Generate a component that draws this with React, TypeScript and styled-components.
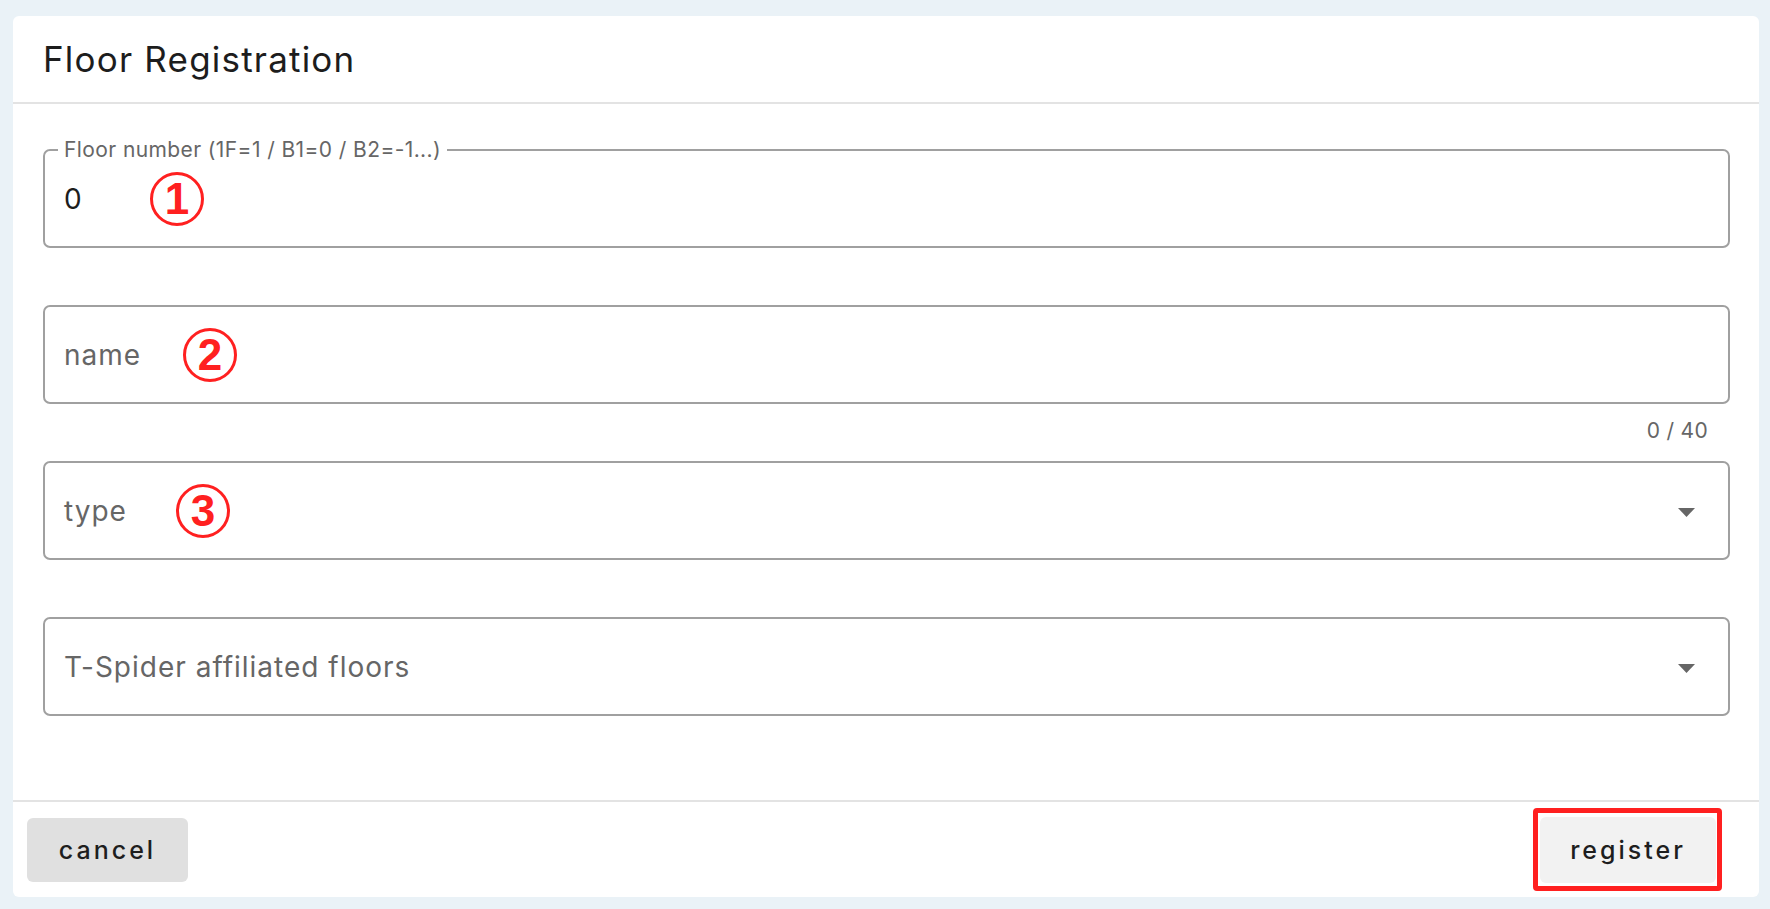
import styled, { createGlobalStyle } from "styled-components";

const GlobalStyle = createGlobalStyle`
  html, body {
    margin: 0;
    padding: 0;
    background: #eaf2f7;
  }
  body {
    font-family: Inter, "Noto Sans", sans-serif;
  }
  * {
    box-sizing: border-box;
  }
`;

const Page = styled.div`
  width: 1770px;
  height: 909px;
  padding: 16px 11px 12px 13px;
  background: #eaf2f7;
`;

const Card = styled.div`
  height: 100%;
  background: #fff;
  border-radius: 6px;
  display: flex;
  flex-direction: column;
  overflow: hidden;
`;

const Header = styled.div`
  height: 88px;
  padding: 0 30px;
  display: flex;
  align-items: center;
  border-bottom: 2px solid #e3e3e3;
`;

const Title = styled.h2`
  margin: 0;
  font-size: 35px;
  font-weight: 400;
  letter-spacing: 1.2px;
  color: #1d1d1d;
`;

const Body = styled.div`
  flex: 1;
  padding: 45px 29px 0 30px;
  display: flex;
  flex-direction: column;
`;

const Group = styled.div<{ $gap?: number }>`
  margin-bottom: ${(p) => p.$gap ?? 57}px;
`;

const Field = styled.div`
  position: relative;
  height: 99px;
  border: 2px solid #a0a0a0;
  border-radius: 7px;
  display: flex;
  align-items: center;
  padding: 0 19px;
`;

const Legend = styled.span`
  position: absolute;
  left: 13px;
  top: -13px;
  padding: 0 6px;
  line-height: 24px;
  font-size: 21px;
  letter-spacing: 0.4px;
  color: #666;
  background: #fff;
`;

const Value = styled.span<{ $muted?: boolean }>`
  font-size: 28px;
  letter-spacing: 1px;
  color: ${(p) => (p.$muted ? "#666" : "#1d1d1d")};
`;

const Arrow = styled.svg`
  margin-left: auto;
  margin-right: 14px;
  margin-top: 4px;
`;

const Helper = styled.div`
  margin: 15px 0 18px;
  padding-right: 22px;
  text-align: right;
  line-height: 24px;
  font-size: 21px;
  letter-spacing: 0.3px;
  color: #666;
`;

const Badge = styled.span<{ $left: number }>`
  position: absolute;
  left: ${(p) => p.$left}px;
  top: 50%;
  transform: translateY(-50%);
  width: 54px;
  height: 54px;
  border: 3px solid #ff2020;
  border-radius: 50%;
  display: flex;
  align-items: center;
  justify-content: center;
  font-family: "Liberation Sans", Arial, sans-serif;
  font-weight: 700;
  font-size: 44px;
  color: #ff2020;
`;

const Footer = styled.div`
  height: 97px;
  border-top: 2px solid #e3e3e3;
  display: flex;
  align-items: center;
  justify-content: space-between;
  padding: 0 43px 0 14px;
`;

const Button = styled.button<{ $bg: string; $w: number; $h: number }>`
  width: ${(p) => p.$w}px;
  height: ${(p) => p.$h}px;
  border: none;
  border-radius: 6px;
  background: ${(p) => p.$bg};
  font-family: inherit;
  font-size: 25px;
  font-weight: 500;
  letter-spacing: 3px;
  color: #1e1e1e;
  cursor: pointer;
`;

const Highlight = styled.div`
  position: relative;
  display: flex;

  &::after {
    content: "";
    position: absolute;
    top: -9px;
    right: -6px;
    bottom: -8px;
    left: -7px;
    border: 5px solid #ff2020;
    border-radius: 4px;
    pointer-events: none;
  }
`;

function DropArrow() {
  return (
    <Arrow width="17" height="9" viewBox="0 0 17 9">
      <path d="M0 0h17L8.5 9z" fill="#666" />
    </Arrow>
  );
}

export default function App() {
  return (
    <>
      <GlobalStyle />
      <Page>
        <Card>
          <Header>
            <Title>Floor Registration</Title>
          </Header>
          <Body>
            <Group>
              <Field>
                <Legend>Floor number (1F=1 / B1=0 / B2=-1...)</Legend>
                <Value>0</Value>
                <Badge $left={105}>1</Badge>
              </Field>
            </Group>
            <Group $gap={0}>
              <Field>
                <Value $muted>name</Value>
                <Badge $left={138}>2</Badge>
              </Field>
              <Helper>0 / 40</Helper>
            </Group>
            <Group>
              <Field>
                <Value $muted>type</Value>
                <Badge $left={131}>3</Badge>
                <DropArrow />
              </Field>
            </Group>
            <Group $gap={0}>
              <Field>
                <Value $muted>T-Spider affiliated floors</Value>
                <DropArrow />
              </Field>
            </Group>
          </Body>
          <Footer>
            <Button $bg="#e0e0e0" $w={161} $h={64}>
              cancel
            </Button>
            <Highlight>
              <Button $bg="#f2f2f2" $w={176} $h={66}>
                register
              </Button>
            </Highlight>
          </Footer>
        </Card>
      </Page>
    </>
  );
}
